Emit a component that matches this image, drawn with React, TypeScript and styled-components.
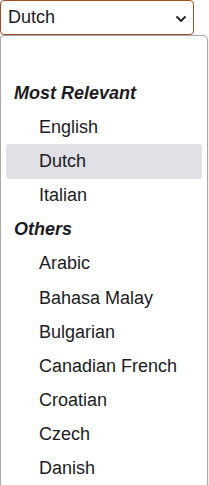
import React from "react";
import styled, { createGlobalStyle } from "styled-components";

const Global = createGlobalStyle`
  html, body { margin: 0; padding: 0; background: #fff; overflow: hidden; }
  body { font-family: "Liberation Sans", Arial, sans-serif; color: #1c1b1f; }
`;

const Wrap = styled.div`
  width: 209px;
  display: flex;
  flex-direction: column;
`;

const Select = styled.div`
  box-sizing: border-box;
  width: 194px;
  height: 35px;
  border: 1px solid #a34f27;
  border-radius: 4px;
  display: flex;
  align-items: center;
  justify-content: space-between;
  padding: 0 6px 0 7px;
  font-size: 18px;
`;

const Chevron = styled.svg`
  width: 12px;
  height: 12px;
  margin-top: 3px;
`;

const Menu = styled.div`
  box-sizing: border-box;
  width: 208px;
  height: 460px;
  border: 1px solid #a8a8a8;
  border-bottom: none;
  border-radius: 4px 5px 0 0;
  box-shadow: 0 1px 3px rgba(0, 0, 0, 0.15);
  padding: 6px 5px 0 5px;
  display: flex;
  flex-direction: column;
`;

const Row = styled.div<{ $header?: boolean; $active?: boolean }>`
  height: 34.15px;
  flex: none;
  display: flex;
  align-items: center;
  font-size: 18px;
  padding-left: ${(p) => (p.$header ? "8px" : "33px")};
  font-weight: ${(p) => (p.$header ? 700 : 400)};
  font-style: ${(p) => (p.$header ? "italic" : "normal")};
  background: ${(p) => (p.$active ? "#e1e0e6" : "transparent")};
  border-radius: 3px;
  color: #1c1b1f;
`;

const groups: { title: string; items: string[] }[] = [
  { title: "Most Relevant", items: ["English", "Dutch", "Italian"] },
  {
    title: "Others",
    items: [
      "Arabic",
      "Bahasa Malay",
      "Bulgarian",
      "Canadian French",
      "Croatian",
      "Czech",
      "Danish",
    ],
  },
];

export default function App() {
  return (
    <Wrap>
      <Global />
      <Select>
        <span>Dutch</span>
        <Chevron viewBox="0 0 12 12">
          <path d="M1.5 3.5 L6 8 L10.5 3.5" fill="none" stroke="#1c1b1f" strokeWidth="1.8" />
        </Chevron>
      </Select>
      <Menu>
        <Row />
        {groups.map((g) => (
          <React.Fragment key={g.title}>
            <Row $header>{g.title}</Row>
            {g.items.map((it) => (
              <Row key={it} $active={it === "Dutch"}>
                {it}
              </Row>
            ))}
          </React.Fragment>
        ))}
      </Menu>
    </Wrap>
  );
}
